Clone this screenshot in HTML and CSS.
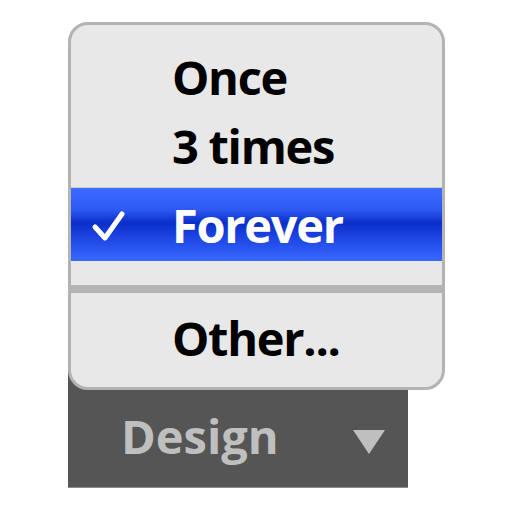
FILE: index.html
```html
<!DOCTYPE html>
<html lang="en">
<head>
  <meta charset="UTF-8" />
  <title>Repeat Menu</title>
  <link rel="stylesheet" href="styles.css">
</head>
<body>
  <div class="popup">
    <div class="menu">
      <div class="item">Once</div>
      <div class="item">3 times</div>
      <div class="item selected">
        <svg class="check" width="40" height="34" viewBox="0 0 40 34">
          <polyline points="4,17 14,28 31,4" fill="none" stroke="#fff" stroke-width="5" stroke-linecap="round" stroke-linejoin="round" />
        </svg>
        Forever
      </div>
      <div class="separator"></div>
      <div class="item other">Other...</div>
    </div>
    <div class="bar">
      <span class="bar-label">Design</span>
      <svg class="arrow" width="32" height="24" viewBox="0 0 32 24">
        <polygon points="0,0 32,0 16,24" fill="#bfbfbf" />
      </svg>
    </div>
  </div>
</body>
</html>
```

FILE: styles.css
```css
* {
  margin: 0;
  padding: 0;
  box-sizing: border-box;
}
body {
  background: #ffffff;
  font-family: 'Open Sans', sans-serif;
  font-weight: bold;
}
.popup {
  padding: 22px 0 0 68px;
}
.menu {
  position: relative;
  z-index: 1;
  width: 377px;
  height: 368px;
  padding-top: 17px;
  background: #e8e8e8;
  border: 3px solid #b3b3b3;
  border-radius: 20px;
}
.item {
  display: flex;
  align-items: center;
  height: 69px;
  padding-left: 101px;
  font-size: 47px;
  letter-spacing: -1.3px;
  color: #000;
}
.selected {
  position: relative;
  height: 74px;
  margin-top: 7px;
  border-top: 1px solid #c9ccd6;
  color: #fff;
  background: linear-gradient(#3d6cff 0%, #2d58f2 30%, #0a2ec8 48%, #1a42e0 65%, #3a68ff 100%);
}
.check {
  position: absolute;
  left: 20px;
  top: 22px;
}
.separator {
  height: 8px;
  margin-top: 24px;
  background: #b4b4b4;
}
.other {
  height: 89px;
}
.bar {
  display: flex;
  align-items: center;
  justify-content: space-between;
  width: 340px;
  height: 128px;
  margin-top: -30px;
  padding: 30px 23px 0 53px;
  background: #555555;
  border-bottom: 1px solid #8a8a8a;
}
.bar-label {
  font-size: 47px;
  color: #bfbfbf;
  margin-top: -6px;
}
.arrow {
  margin-top: 6px;
}
```
